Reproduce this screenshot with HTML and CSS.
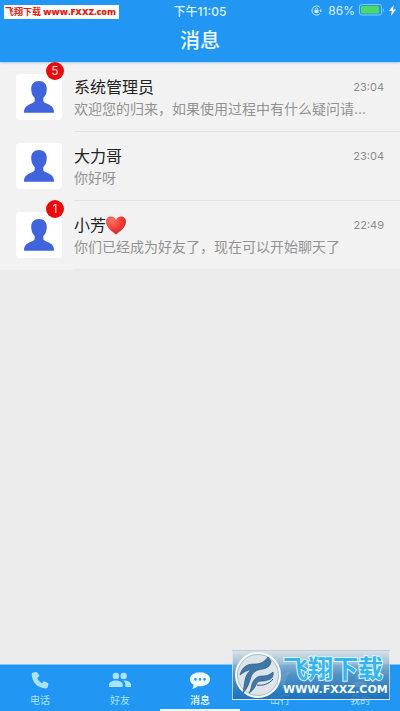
FILE: index.html
```
<!DOCTYPE html>
<html lang="zh-CN">
<head>
<meta charset="utf-8">
<meta name="viewport" content="width=device-width, initial-scale=1">
<title>消息</title>
<link rel="stylesheet" href="styles.css">
</head>
<body>
<svg class="defs" aria-hidden="true">
  <symbol id="person" viewBox="0 0 30 32">
    <path d="M15 0C10 0 7.200 3 7.200 8c0 4 1.300 7 3.500 9v2.600c0 1.400-.9 2-2.600 2.700C3 24.300 0 26.300 0 31v.8h30V31c0-4.700-3-6.700-8.100-8.700-1.700-.7-2.600-1.300-2.600-2.700V17c2.200-2 3.500-5 3.500-9 0-5-2.800-8-7.800-8z"/>
  </symbol>
</svg>
<div class="app">
  <header class="header">
    <div class="status">
      <span class="clock">下午11:05</span>
      <div class="power">
        <svg class="lock" viewBox="0 0 12 12" aria-hidden="true">
          <path d="M9.600 2.500A5 5 0 1 0 9.600 9.500M10.800 4.500v2" fill="none" stroke="currentColor"/>
          <path d="M9.200 6.200h2.800L10.600 8z"/>
          <rect x="3.800" y="5.400" width="4.400" height="3.200"/>
          <path d="M4.700 5.500V4.400a1.300 1.300 0 0 1 2.600 0v1.100" fill="none" stroke="currentColor" stroke-width=".8"/>
        </svg>
        <span>86%</span>
        <svg class="battery" viewBox="0 0 26 12" aria-hidden="true">
          <rect x=".5" y=".5" width="22" height="10.500" rx="2" fill="none" stroke="#7fd0ee"/>
          <rect x="2" y="2" width="18" height="7.500" rx="1" fill="#4cd964"/>
          <path d="M24 4v4c1.300-.5 1.300-3.500 0-4z" fill="#7fd0ee"/>
        </svg>
        <svg class="bolt" viewBox="0 0 7 11" aria-hidden="true"><path d="M4.800 0L0 6h2.900L1.800 11 7 4.500H4z"/></svg>
      </div>
    </div>
    <h1 class="title">消息</h1>
    <div class="site-tag">飞翔下载 <b>www.FXXZ.com</b></div>
  </header>

  <main class="content">
    <ul class="list">
      <li class="row">
        <div class="avatar"><svg><use href="#person"/></svg><span class="badge">5</span></div>
        <div class="body">
          <div class="line"><h2 class="name">系统管理员</h2><time class="time">23:04</time></div>
          <p class="preview">欢迎您的归来，如果使用过程中有什么疑问请...</p>
        </div>
      </li>
      <li class="row">
        <div class="avatar"><svg><use href="#person"/></svg></div>
        <div class="body">
          <div class="line"><h2 class="name">大力哥</h2><time class="time">23:04</time></div>
          <p class="preview">你好呀</p>
        </div>
      </li>
      <li class="row">
        <div class="avatar"><svg><use href="#person"/></svg><span class="badge">1</span></div>
        <div class="body">
          <div class="line">
            <h2 class="name">小芳<svg class="heart" viewBox="0 0 20 19" aria-hidden="true">
              <defs><radialGradient id="red" cx=".3" cy=".25" r=".9"><stop offset="0" stop-color="#ff7468"/><stop offset=".5" stop-color="#f03e38"/><stop offset="1" stop-color="#c91d2a"/></radialGradient></defs>
              <path fill="url(#red)" d="M10 18.500C7 16.500 0 11.500 0 5.600 0 2.600 2.300.5 5 .5c2.300 0 4.100 1.300 5 3.400.9-2.100 2.700-3.400 5-3.400 2.700 0 5 2.100 5 5.100 0 5.900-7 10.900-10 12.900z"/>
            </svg></h2><time class="time">22:49</time>
          </div>
          <p class="preview">你们已经成为好友了，现在可以开始聊天了</p>
        </div>
      </li>
    </ul>
  </main>

  <footer class="footer">
    <nav class="tabs">
      <a class="tab" href="#phone">
        <svg viewBox="0 0 24 24" aria-hidden="true"><path d="M7.500 3.200L4.800 3.900C3.600 4.300 3 5.200 3 6.400 3.500 15 9.400 20.700 18 21.200c1.200.1 2.200-.6 2.500-1.800l.7-2.800c.1-.6-.1-1-.6-1.300l-3.500-1.800c-.5-.2-1-.1-1.400.3l-1.500 1.700C11.800 14.200 10 12.200 9 9.700l1.800-1.400c.4-.4.5-.9.300-1.400L9 3.900c-.3-.6-.8-.9-1.500-.7z"/></svg>
        <span>电话</span>
      </a>
      <a class="tab" href="#friends">
        <svg viewBox="0 0 24 24" aria-hidden="true"><path d="M16 11a3.500 3.500 0 1 0 0-7 3.500 3.500 0 0 0 0 7zM7.500 11a3.500 3.500 0 1 0 0-7 3.500 3.500 0 0 0 0 7zM7.500 12.500C4.500 12.500 0 14 0 17v2.500h15V17c0-3-4.500-4.500-7.500-4.500zM16.500 12.500h-1.200c1.600 1.100 2.500 2.700 2.500 4.500v2.500H24V17c0-3-4.500-4.500-7.500-4.500z"/></svg>
        <span>好友</span>
      </a>
      <a class="tab active" href="#messages" aria-current="page">
        <svg viewBox="0 0 24 24" aria-hidden="true"><path fill-rule="evenodd" d="M12 3.500c-6.200 0-11 3.400-11 7.700 0 2.600 1.500 4.600 4 6 .1 2-.7 3.200-2 4.300 2.700-.1 4.700-1.100 6.200-2.800.9.200 1.800.2 2.800.2 6.200 0 11-3.400 11-7.700s-4.800-7.700-11-7.700zM7 9.800a1.500 1.500 0 1 1 0 3 1.500 1.500 0 0 1 0-3zm5 0a1.500 1.500 0 1 1 0 3 1.500 1.500 0 0 1 0-3zm5 0a1.500 1.500 0 1 1 0 3 1.500 1.500 0 0 1 0-3z"/></svg>
        <span>消息</span>
      </a>
      <a class="tab" href="#travel">
        <svg viewBox="0 0 24 24" aria-hidden="true"><path d="M2 11L22 3l-7 18-3-8z"/></svg>
        <span>出行</span>
      </a>
      <a class="tab" href="#me">
        <svg viewBox="0 0 24 24" aria-hidden="true"><path d="M12 12a4 4 0 1 0 0-8 4 4 0 0 0 0 8zM12 13.500c-4 0-8 1.500-8 4.500v2h16v-2c0-3-4-4.500-8-4.500z"/></svg>
        <span>我的</span>
      </a>
    </nav>
    <div class="mark">
      <svg class="mark-logo" viewBox="0 0 46 46" aria-hidden="true">
        <circle cx="23" cy="23" r="22" fill="#dde4ea" stroke="#f5fafd" stroke-width="2"/>
        <circle cx="23" cy="23" r="20.500" fill="none" stroke="#a3b5c3" stroke-width=".8"/>
        <g fill="#3f77a6" stroke="#24557f" stroke-width=".6">
          <path d="M5 23C7 15 12 12 19 12c7 0 10-2 14-7l3 4c0 4-3 7-8 8-7 1-10 3-12 8-2 7-4 12-8 16 1-5 1-9 2-13 1-5 3-8 6-10-4 0-7 2-11 5z"/>
          <path d="M17 32c2-5 5-8 10-8 5 0 7-1 11-4 1 4-1 7-5 8-5 2-9 0-11 3-2 4-4 8-8 10 2-3 2-6 3-9z"/>
        </g>
        <path d="M22 33c6 1 12-1 16-6" fill="none" stroke="#24557f"/>
      </svg>
      <div class="mark-text">
        <span class="mark-name">飞翔下载</span>
        <span class="mark-url">WWW.FXXZ.COM</span>
      </div>
    </div>
  </footer>
</div>
</body>
</html>
```
FILE: styles.css
```
* { box-sizing: border-box; }
body, h1, h2, p, ul { margin: 0; padding: 0; }
body { font-family: Inter, "Noto Sans CJK SC", sans-serif; background: #ebebeb; }
svg { display: block; fill: currentColor; }
.defs { position: absolute; width: 0; height: 0; }
.app { display: flex; flex-direction: column; min-height: 100vh; }

.header {
  position: relative;
  height: 62px;
  background: #2196f3;
  color: #fff;
  box-shadow: 0 1px 2px #9fc9ee;
}
.status {
  display: flex;
  align-items: center;
  justify-content: center;
  height: 20px;
  color: #d8f2ff;
  font-size: 12px;
}
.clock { font-weight: 500; }
.power {
  position: absolute;
  right: 4px;
  display: flex;
  align-items: center;
  gap: 6px;
}
.lock { width: 11px; height: 11px; }
.battery { width: 26px; height: 12px; margin-left: -2px; }
.bolt { width: 7px; height: 11px; color: #fff; margin-left: -2px; }
.title {
  text-align: center;
  font-size: 20px;
  line-height: 42px;
  font-weight: 500;
  color: #ecfaff;
}
.site-tag {
  position: absolute;
  left: 4px;
  top: 5px;
  padding: 0 3px 0 1px;
  background: #fff;
  color: #e01c14;
  font: 700 9px/14px "Open Sans", "Noto Sans CJK SC", sans-serif;
  white-space: nowrap;
}

.content { flex: 1; }
.list { list-style: none; padding-top: 1px; background: #f2f2f2; }
.row { display: flex; gap: 12px; height: 69px; padding-left: 16px; }
.avatar {
  position: relative;
  flex: none;
  width: 46px;
  height: 46px;
  margin-top: 11px;
  padding: 7px 8px;
  border-radius: 4px;
  background: #fff;
  color: #4064dc;
}
.avatar svg { width: 30px; height: 32px; }
.badge {
  position: absolute;
  top: -12px;
  right: -2px;
  width: 18px;
  height: 18px;
  border-radius: 50%;
  background: #e90a0e;
  color: #ffdcdc;
  font-size: 12px;
  line-height: 18px;
  text-align: center;
}
.body {
  flex: 1;
  min-width: 0;
  padding: 12px 16px 0 0;
  border-bottom: 1px solid #e3e3e3;
}
.row:last-child .body { border-color: #e8e8e8; }
.line { display: flex; justify-content: space-between; align-items: center; height: 24px; }
.name {
  display: flex;
  align-items: center;
  font-size: 16px;
  font-weight: 400;
  line-height: 24px;
  color: #222;
}
.heart { width: 20px; height: 19px; }
.time { font-size: 11px; color: #8c8c8c; }
.preview {
  overflow: hidden;
  font-size: 14px;
  line-height: 20px;
  color: #929292;
  white-space: nowrap;
}

.footer { position: relative; background: #2196f3; border-top: 1px solid #7cc9f8; }
.tabs { display: flex; }
.tab {
  flex: 1;
  display: flex;
  flex-direction: column;
  align-items: center;
  gap: 2px;
  height: 46px;
  padding-top: 4px;
  border-bottom: 2px solid transparent;
  color: #a9e4fc;
  font-size: 10px;
  line-height: 14px;
  text-decoration: none;
}
.tab svg { width: 22px; height: 22px; }
.tab.active { color: #f0fcff; border-color: #e8faff; font-weight: 500; }

.mark {
  position: absolute;
  right: 10px;
  bottom: 11px;
  display: flex;
  align-items: center;
  gap: 2px;
  width: 158px;
  height: 50px;
  padding-left: 2px;
  border: 1px solid rgba(225, 240, 250, .7);
  background: linear-gradient(rgba(215, 222, 228, .9), rgba(90, 145, 190, .86) 50%, rgba(25, 103, 174, .78));
}
.mark-logo { flex: none; width: 46px; height: 46px; }
.mark-text { display: flex; flex-direction: column; white-space: nowrap; }
.mark-name {
  color: #35b4ee;
  font-size: 25px;
  line-height: 30px;
  font-weight: 700;
  -webkit-text-stroke: 2px #d8f4ff;
  paint-order: stroke fill;
}
.mark-url {
  color: #f4fbff;
  font: 700 11px/12px "DejaVu Sans", sans-serif;
}
```
